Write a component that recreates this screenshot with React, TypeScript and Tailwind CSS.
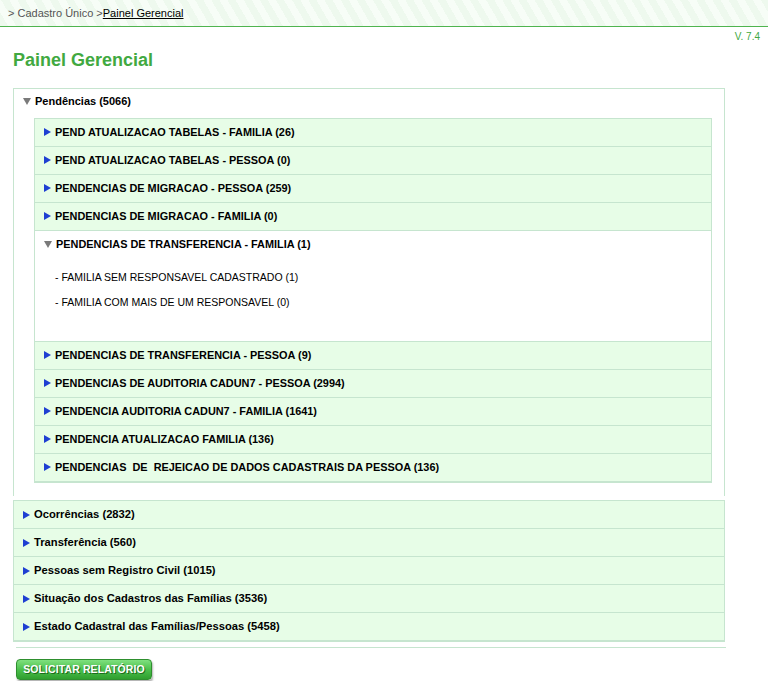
import React from 'react';

const pendencias = [
  { label: 'PEND ATUALIZACAO TABELAS - FAMILIA (26)' },
  { label: 'PEND ATUALIZACAO TABELAS - PESSOA (0)' },
  { label: 'PENDENCIAS DE MIGRACAO - PESSOA (259)' },
  { label: 'PENDENCIAS DE MIGRACAO - FAMILIA (0)' },
  {
    label: 'PENDENCIAS DE TRANSFERENCIA - FAMILIA (1)',
    items: ['- FAMILIA SEM RESPONSAVEL CADASTRADO (1)', '- FAMILIA COM MAIS DE UM RESPONSAVEL (0)'],
  },
  { label: 'PENDENCIAS DE TRANSFERENCIA - PESSOA (9)' },
  { label: 'PENDENCIAS DE AUDITORIA CADUN7 - PESSOA (2994)' },
  { label: 'PENDENCIA AUDITORIA CADUN7 - FAMILIA (1641)' },
  { label: 'PENDENCIA ATUALIZACAO FAMILIA (136)' },
  { label: 'PENDENCIAS  DE  REJEICAO DE DADOS CADASTRAIS DA PESSOA (136)' },
];

const outros = [
  'Ocorrências (2832)',
  'Transferência (560)',
  'Pessoas sem Registro Civil (1015)',
  'Situação dos Cadastros das Famílias (3536)',
  'Estado Cadastral das Famílias/Pessoas (5458)',
];

function ArrowRight() {
  return (
    <svg width="7" height="8" viewBox="0 0 7 8" className="shrink-0">
      <path d="M0 0 L7 4 L0 8 Z" fill="#1f3fd2" />
    </svg>
  );
}

function ArrowDown() {
  return (
    <svg width="8" height="7" viewBox="0 0 8 7" className="shrink-0">
      <path d="M0 0 L8 0 L4 7 Z" fill="#7a7a7a" />
    </svg>
  );
}

export default function App() {
  return (
    <div
      className="min-h-[681px] bg-white text-black"
      style={{ fontFamily: '"Liberation Sans", Arial, sans-serif' }}
    >
      {/* breadcrumb */}
      <div className="h-[27px] border-b border-[#4fb44f] bg-[repeating-linear-gradient(60deg,#eef9ee_0px,#eef9ee_7px,#f7fdf7_7px,#f7fdf7_14px)] pl-[8px] flex items-center text-[11px] text-[#555]">
        <span>&gt; Cadastro Único &gt;</span>
        <span className="text-black underline">Painel Gerencial</span>
      </div>

      <div className="mt-[4px] pr-[8px] text-right text-[10px] leading-[12px] text-[#3fa83f]">V. 7.4</div>

      <h1 className="mt-[6px] ml-[13px] text-[18px] leading-[22px] font-bold text-[#41a941]">Painel Gerencial</h1>

      <div className="ml-[13px] mt-[17px] w-[712px]">
        {/* Pendências */}
        <div className="border-x border-t border-[#c6e5cf] h-[408px]">
          <div className="h-[29px] pb-[5px] flex items-center gap-[4px] pl-[9px] text-[11px] font-bold">
            <ArrowDown />
            <span>Pendências (5066)</span>
          </div>
          <div className="ml-[20px] mr-[12px] border-x border-t border-b-2 border-[#c6e5cf]">
            {pendencias.map((p, i) => (
              <div
                key={i}
                className={`border-b border-[#c6e5cf] last:border-b-0 ${p.items ? 'bg-white' : 'bg-[#e7fde7]'}`}
              >
                <div className="h-[27px] pb-[1px] flex items-center gap-[4px] pl-[9px] text-[10.9px] font-bold">
                  {p.items ? <ArrowDown /> : <ArrowRight />}
                  <span className="whitespace-pre">{p.label}</span>
                </div>
                {p.items && (
                  <div className="pt-[7px] pb-[26px] pl-[20px] text-[10.5px] leading-[25px]">
                    {p.items.map((t) => (
                      <div key={t}>{t}</div>
                    ))}
                  </div>
                )}
              </div>
            ))}
          </div>
        </div>

        {/* other sections */}
        <div className="mt-[4px] border-x border-t border-b-2 border-[#c6e5cf] bg-[#e7fde7]">
          {outros.map((o) => (
            <div
              key={o}
              className="h-[28px] border-b border-[#c6e5cf] last:border-b-0 last:h-[27px] flex items-center gap-[4px] pl-[9px] text-[11.2px] font-bold"
            >
              <ArrowRight />
              <span>{o}</span>
            </div>
          ))}
        </div>
      </div>

      <div className="ml-[16px] mt-[5px] w-[710px] border-t border-[#c6e5cf]" />

      <div className="ml-[16px] mt-[8px]">
        <button className="h-[21px] w-[136px] rounded-[4px] border border-[#2e8f2e] bg-[linear-gradient(to_bottom,#7fe07f,#4cc04c_50%,#2f9f2f)] text-[10.5px] font-bold tracking-[0.1px] text-white [text-shadow:1px_1px_0_#1d6b1d] shadow-[1px_2px_2px_rgba(0,0,0,0.3)]">
          SOLICITAR RELATÓRIO
        </button>
      </div>
    </div>
  );
}
